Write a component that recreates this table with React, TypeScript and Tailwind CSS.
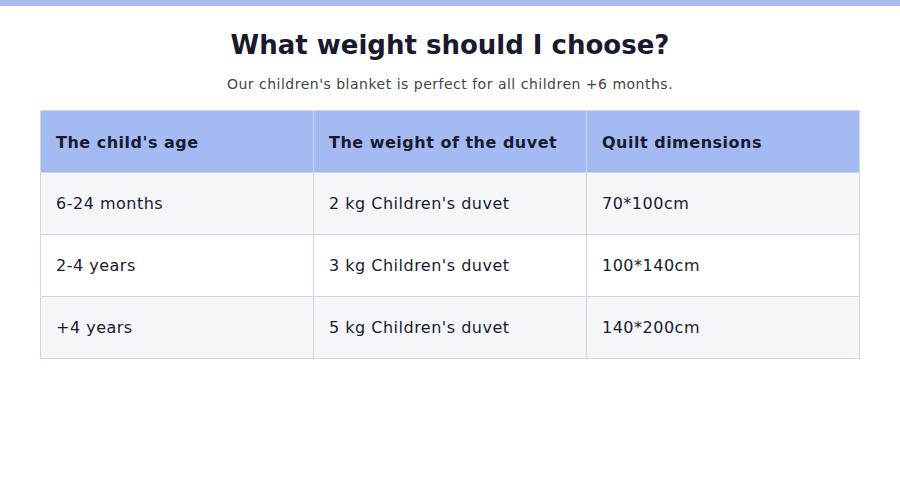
const rows = [
  ['6-24 months', "2 kg Children's duvet", '70*100cm'],
  ['2-4 years', "3 kg Children's duvet", '100*140cm'],
  ['+4 years', "5 kg Children's duvet", '140*200cm'],
];

export default function App() {
  return (
    <div className="min-h-[500px] w-[900px] bg-white font-['DejaVu_Sans',sans-serif] text-[#1a1a2e]">
      <div className="h-1.5 bg-[#a4baf2]" />
      <h1 className="mt-[24px] text-center text-[26px] font-bold leading-[30px]">What weight should I choose?</h1>
      <p className="mt-[14px] text-center text-[14px] leading-[20px] tracking-[0.5px] text-[#444]">
        Our children's blanket is perfect for all children +6 months.
      </p>
      <div className="mx-10 mt-[16px]">
        <table className="w-full table-fixed border-collapse text-left text-[16px] tracking-[0.5px]">
          <thead>
            <tr className="h-[62px] bg-[#a4baf2]">
              <th className="border border-[#d0d5e8] pl-[15px] pr-4 pt-[2px] font-bold">The child's age</th>
              <th className="border border-[#d0d5e8] pl-[15px] pr-4 pt-[2px] font-bold">The weight of the duvet</th>
              <th className="border border-[#d0d5e8] pl-[15px] pr-4 pt-[2px] font-bold">Quilt dimensions</th>
            </tr>
          </thead>
          <tbody>
            {rows.map((r, i) => (
              <tr key={i} className={i % 2 === 0 ? 'h-[62px] bg-[#f4f6fa]' : 'h-[62px] bg-white'}>
                {r.map((c, j) => (
                  <td key={j} className="border border-[#d0d5e8] pl-[15px] pr-4">{c}</td>
                ))}
              </tr>
            ))}
          </tbody>
        </table>
      </div>
    </div>
  );
}
